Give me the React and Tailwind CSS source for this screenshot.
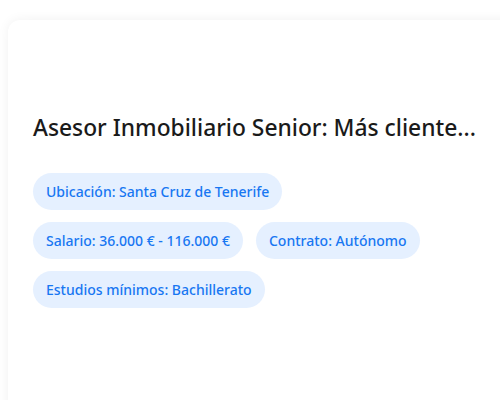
export default function App() {
  const tags = [
    ["Ubicación: Santa Cruz de Tenerife"],
    ["Salario: 36.000 € - 116.000 €", "Contrato: Autónomo"],
    ["Estudios mínimos: Bachillerato"],
  ];

  return (
    <div className="w-[500px] h-[400px] overflow-hidden bg-white pl-2 pt-5" style={{ fontFamily: '"Noto Sans", "Open Sans", sans-serif' }}>
      <div className="w-[520px] h-[420px] bg-white rounded-xl shadow-[0_0_12px_rgba(0,0,0,0.06)] px-[25px] pt-[93px]">
        <h2 className="text-[22.8px] leading-[30px] font-medium text-[#1a1a1a] whitespace-nowrap">
          Asesor Inmobiliario Senior: Más cliente...
        </h2>

        <div className="mt-[30px] flex flex-col gap-3">
          {tags.map((row, i) => (
            <div key={i} className="flex gap-[13px]">
              {row.map((t) => (
                <span key={t} className="h-[37px] px-[13px] flex items-center rounded-full bg-[#e5f0ff] text-[#1877f2] text-sm font-medium">
                  {t}
                </span>
              ))}
            </div>
          ))}
        </div>
      </div>
    </div>
  );
}
